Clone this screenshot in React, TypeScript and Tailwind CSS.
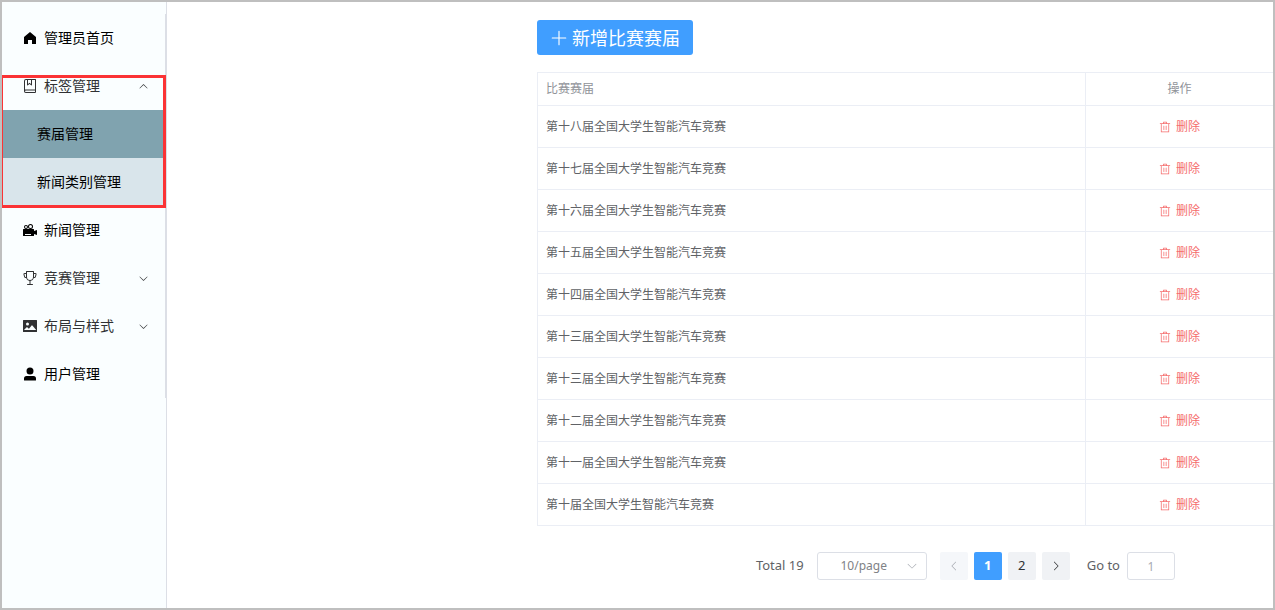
import { useState } from "react";
import type { ReactNode } from "react";

const iconPaths = {
  home: "M512 128 128 447.936V896h255.936V640H640v256h255.936V447.936z",
  collection:
    "M192 736h640V128H256a64 64 0 0 0-64 64zm64-672h608a32 32 0 0 1 32 32v672a32 32 0 0 1-32 32H160l-32 57.536V192A128 128 0 0 1 256 64M240 800a48 48 0 1 0 0 96h592v-96zm0-64h656v160a64 64 0 0 1-64 64H240a112 112 0 0 1 0-224m144-608v250.88l96-76.8 96 76.8V128zm-64-64h320v381.44a32 32 0 0 1-51.968 24.96L480 384l-108.032 86.4A32 32 0 0 1 320 445.44z",
  camera:
    "m768 576 192-64v320l-192-64v96a32 32 0 0 1-32 32H96a32 32 0 0 1-32-32V480a32 32 0 0 1 32-32h640a32 32 0 0 1 32 32zM192 768v64h384v-64zm192-480a160 160 0 0 1 320 0 160 160 0 0 1-320 0m64 0a96 96 0 1 0 192.064-.064A96 96 0 0 0 448 288m-320 32a128 128 0 1 1 256.064.064A128 128 0 0 1 128 320m64 0a64 64 0 1 0 128 0 64 64 0 0 0-128 0",
  trophy:
    "M480 896V702.08A256.256 256.256 0 0 1 264.064 512h-32.64a96 96 0 0 1-91.968-68.416L93.632 290.88a76.8 76.8 0 0 1 73.6-98.88H256V96a32 32 0 0 1 32-32h448a32 32 0 0 1 32 32v96h88.768a76.8 76.8 0 0 1 73.6 98.88L884.48 443.52A96 96 0 0 1 792.576 512h-32.64A256.256 256.256 0 0 1 544 702.08V896h128a32 32 0 1 1 0 64H352a32 32 0 1 1 0-64zm224-448V128H320v320a192 192 0 1 0 384 0m64 0h24.576a32 32 0 0 0 30.656-22.784l45.824-152.768A12.8 12.8 0 0 0 856.768 256H768zm-512 0V256h-88.768a12.8 12.8 0 0 0-12.288 16.448l45.824 152.768A32 32 0 0 0 231.424 448z",
  picture:
    "M96 896a32 32 0 0 1-32-32V160a32 32 0 0 1 32-32h832a32 32 0 0 1 32 32v704a32 32 0 0 1-32 32zm315.52-228.48-68.928-68.928a32 32 0 0 0-45.248 0L128 768.064h778.688l-242.112-290.56a32 32 0 0 0-49.216 0L458.752 665.408a32 32 0 0 1-47.232 2.112M256 384a96 96 0 1 0 192.064-.064A96 96 0 0 0 256 384",
  user: "M288 320a224 224 0 1 0 448 0 224 224 0 1 0-448 0m544 608H160a32 32 0 0 1-32-32v-96a160 160 0 0 1 160-160h448a160 160 0 0 1 160 160v96a32 32 0 0 1-32 32z",
  trash:
    "M160 256H96a32 32 0 0 1 0-64h256V95.936a32 32 0 0 1 32-32h256a32 32 0 0 1 32 32V192h256a32 32 0 1 1 0 64h-64v672a32 32 0 0 1-32 32H192a32 32 0 0 1-32-32zm448-64v-64H416v64zM224 896h576V256H224zm192-128a32 32 0 0 1-32-32V416a32 32 0 0 1 64 0v320a32 32 0 0 1-32 32m192 0a32 32 0 0 1-32-32V416a32 32 0 0 1 64 0v320a32 32 0 0 1-32 32",
  plus: "M480 480V128a32 32 0 0 1 64 0v352h352a32 32 0 1 1 0 64H544v352a32 32 0 1 1-64 0V544H128a32 32 0 0 1 0-64z",
  arrow:
    "M831.872 340.864 512 652.672 192.128 340.864a30.592 30.592 0 0 0-42.752 0 29.12 29.12 0 0 0 0 41.6L489.664 714.24a32 32 0 0 0 44.672 0l340.288-331.712a29.12 29.12 0 0 0 0-41.728 30.592 30.592 0 0 0-42.752 0z"
};

type IconName = keyof typeof iconPaths;

const seasons = ["十八", "十七", "十六", "十五", "十四", "十三", "十三", "十二", "十一", "十"];

function Icon({ name, className }: { name: IconName; className: string }) {
  return (
    <svg viewBox="0 0 1024 1024" fill="currentColor" aria-hidden="true" className={className}>
      <path d={iconPaths[name]} />
    </svg>
  );
}

export default function App() {
  const [tagsOpen, setTagsOpen] = useState(true);

  return (
    <div className="flex min-h-screen border-2 border-[#bfbfbf] bg-white font-['Noto_Sans','Noto_Sans_CJK_SC',sans-serif] text-[#606266]">
      <aside className="w-[165px] shrink-0 border-r border-[#dcdfe6] bg-[#fafeff] pt-3">
        <nav className="border-r border-[#dcdfe6] text-sm text-black">
          <MenuLink icon="home" label="管理员首页" />
          <div className="relative">
            <MenuGroup
              icon="collection"
              label="标签管理"
              open={tagsOpen}
              onClick={() => setTagsOpen(!tagsOpen)}
            />
            {tagsOpen ? (
              <>
                <a href="#seasons" className="flex h-12 items-center bg-[#80a3af] pl-[35px]">
                  赛届管理
                </a>
                <a href="#categories" className="flex h-12 items-center bg-[#d9e5eb] pl-[35px]">
                  新闻类别管理
                </a>
              </>
            ) : null}
            {/* 红框标出当前分组 */}
            <div className="pointer-events-none absolute -right-px -bottom-0.5 left-0 top-[13px] border-3 border-l border-[#fb3335]" />
          </div>
          <MenuLink icon="camera" label="新闻管理" />
          <MenuGroup icon="trophy" label="竞赛管理" />
          <MenuGroup icon="picture" label="布局与样式" />
          <MenuLink icon="user" label="用户管理" />
        </nav>
      </aside>

      <main className="min-w-0 flex-1 pt-[18px] pl-[370px]">
        <button
          type="button"
          className="flex h-[35px] items-center gap-1 rounded-[3px] bg-[#409eff] px-[13px] text-lg text-white"
        >
          <Icon name="plus" className="size-[18px]" />
          新增比赛赛届
        </button>

        <table className="mt-[17px] w-full table-fixed border-separate border-spacing-0 border-t border-l border-[#ebeef5] text-xs">
          <thead>
            <tr className="h-[33px] text-[#909399]">
              <th className="border-r border-b border-[#ebeef5] px-2 text-left font-normal">
                比赛赛届
              </th>
              <th className="w-[187px] border-b border-[#ebeef5] px-2 text-center font-normal">
                操作
              </th>
            </tr>
          </thead>
          <tbody>
            {seasons.map((season, index) => (
              <tr key={index} className="h-[42px]">
                <td className="border-r border-b border-[#ebeef5] px-2">
                  第{season}届全国大学生智能汽车竞赛
                </td>
                <td className="border-b border-[#ebeef5] px-2">
                  <button
                    type="button"
                    className="mx-auto flex items-center gap-[5px] text-[#f56c6c]"
                  >
                    <Icon name="trash" className="size-3" />
                    删除
                  </button>
                </td>
              </tr>
            ))}
          </tbody>
        </table>

        <div className="flex items-center justify-end pt-[26px] pr-[98px] pb-7 text-[13px]">
          <span>Total 19</span>
          <div className="relative ml-[13px]">
            <select
              aria-label="每页条数"
              className="h-7 w-[110px] appearance-none rounded-[3px] border border-[#dcdfe6] bg-white pr-4 text-center text-xs text-[#808286]"
            >
              <option>10/page</option>
              <option>20/page</option>
            </select>
            <Icon
              name="arrow"
              className="pointer-events-none absolute top-2 right-[9px] size-3 text-[#a8abb2]"
            />
          </div>
          <div className="ml-[13px] flex gap-1.5">
            <PageButton label="上一页" className="bg-[#f5f7fa] text-[#a8abb2]">
              <Icon name="arrow" className="size-3 rotate-90" />
            </PageButton>
            <PageButton className="bg-[#409eff] font-bold text-white">1</PageButton>
            <PageButton className="bg-[#f0f2f5] text-[#303133]">2</PageButton>
            <PageButton label="下一页" className="bg-[#f0f2f5] text-[#303133]">
              <Icon name="arrow" className="size-3 -rotate-90" />
            </PageButton>
          </div>
          <label className="ml-[17px] flex items-center gap-[7px]">
            Go to
            <input
              type="text"
              defaultValue="1"
              className="h-7 w-12 rounded-[3px] border border-[#dcdfe6] bg-white text-center text-xs text-[#a8abb2]"
            />
          </label>
        </div>
      </main>
    </div>
  );
}

function MenuLink({ icon, label }: { icon: IconName; label: string }) {
  return (
    <a href="#menu" className="flex h-12 items-center gap-1.5 pl-5">
      <Icon name={icon} className="size-4" />
      {label}
    </a>
  );
}

function MenuGroup({
  icon,
  label,
  open = false,
  onClick
}: {
  icon: IconName;
  label: string;
  open?: boolean;
  onClick?: () => void;
}) {
  return (
    <button
      type="button"
      aria-expanded={open}
      onClick={onClick}
      className="flex h-12 w-full items-center gap-1.5 pr-4 pl-5 text-[#303133]"
    >
      <Icon name={icon} className="size-4" />
      {label}
      <Icon name="arrow" className={`ml-auto size-[11px] ${open ? "rotate-180" : ""}`} />
    </button>
  );
}

function PageButton({
  label,
  className,
  children
}: {
  label?: string;
  className: string;
  children: ReactNode;
}) {
  return (
    <button
      type="button"
      aria-label={label}
      className={`flex size-7 items-center justify-center rounded-[2px] ${className}`}
    >
      {children}
    </button>
  );
}
